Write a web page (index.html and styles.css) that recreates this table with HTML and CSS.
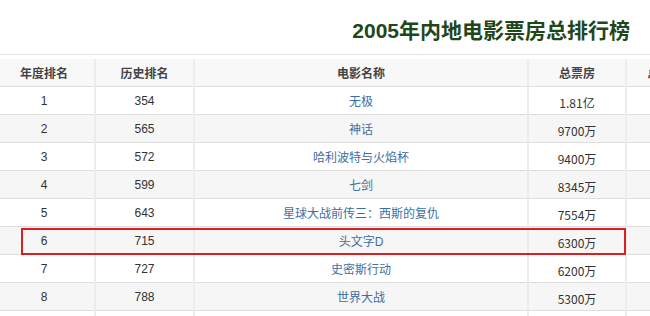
FILE: index.html
```html
<!DOCTYPE html>
<html lang="zh-CN">
<head>
<meta charset="utf-8">
<title>2005年内地电影票房总排行榜</title>
<link rel="stylesheet" href="styles.css">
</head>
<body>
<div class="page">
  <div class="title-bar">
    <h1 class="title">2005年内地电影票房总排行榜</h1>
  </div>
  <table class="rank">
    <colgroup>
      <col class="c1"><col class="c2"><col class="c3"><col class="c4"><col class="c5">
    </colgroup>
    <thead>
      <tr><th>年度排名</th><th>历史排名</th><th>电影名称</th><th>总票房</th><th>总人次</th></tr>
    </thead>
    <tbody>
      <tr><td>1</td><td>354</td><td><a href="#">无极</a></td><td class="money">1.81亿</td><td></td></tr>
      <tr><td>2</td><td>565</td><td><a href="#">神话</a></td><td class="money">9700万</td><td></td></tr>
      <tr><td>3</td><td>572</td><td><a href="#">哈利波特与火焰杯</a></td><td class="money">9400万</td><td></td></tr>
      <tr><td>4</td><td>599</td><td><a href="#">七剑</a></td><td class="money">8345万</td><td></td></tr>
      <tr><td>5</td><td>643</td><td><a href="#">星球大战前传三：西斯的复仇</a></td><td class="money">7554万</td><td></td></tr>
      <tr><td>6</td><td>715</td><td><a href="#">头文字D</a></td><td class="money">6300万</td><td></td></tr>
      <tr><td>7</td><td>727</td><td><a href="#">史密斯行动</a></td><td class="money">6200万</td><td></td></tr>
      <tr><td>8</td><td>788</td><td><a href="#">世界大战</a></td><td class="money">5300万</td><td></td></tr>
      <tr class="tail"><td></td><td></td><td></td><td></td><td></td></tr>
    </tbody>
  </table>
  <div class="highlight"></div>
</div>
</body>
</html>
```
FILE: styles.css
```css
html, body {
  margin: 0;
  padding: 0;
  background: #fff;
  overflow: hidden;
}
body {
  width: 650px;
  height: 316px;
  font-family: "Liberation Sans", "Noto Sans CJK SC", sans-serif;
  color: #333;
}
.page {
  position: relative;
  width: 650px;
  height: 316px;
  overflow: hidden;
}
.title-bar {
  height: 55px;
  border-bottom: 1px solid #e2e2e2;
  display: flex;
  justify-content: flex-end;
  align-items: center;
  padding-right: 20px;
  box-sizing: border-box;
  margin-bottom: 4px;
}
.title {
  margin: 6px 0 0 0;
  font-family: "Liberation Sans", "Noto Sans CJK SC", sans-serif;
  font-size: 21px;
  font-weight: bold;
  color: #1f471c;
  line-height: 1;
  white-space: nowrap;
}
.rank {
  border-collapse: collapse;
  table-layout: fixed;
  width: 710px;
  margin-left: -6px;
  font-size: 12px;
}
.c1 { width: 101px; }
.c2 { width: 99px; }
.c3 { width: 334px; }
.c4 { width: 98px; }
.c5 { width: 78px; }
.rank th, .rank td {
  text-align: center;
  padding: 0;
  border-left: 2px solid #ececec;
  border-bottom: 1px solid #dedede;
  white-space: nowrap;
}
.rank th:first-child, .rank td:first-child {
  border-left: none;
}
.rank th {
  height: 27px;
  font-weight: bold;
  color: #444;
  background: #f8f8f8;
}
.rank td {
  height: 27px;
  color: #333;
}
.rank tbody tr:nth-child(even) td {
  background: #f6f6f6;
}
.rank tbody tr.tail td {
  background: #fff;
}
.rank a {
  color: #3c6fa3;
  text-decoration: none;
}
.rank td.money {
  font-family: "Noto Sans CJK SC", sans-serif;
  font-size: 12px;
  padding-top: 3px;
  height: 24px;
}
.highlight {
  position: absolute;
  left: 21px;
  top: 228px;
  width: 605px;
  height: 27px;
  box-sizing: border-box;
  border: 2px solid #d7201f;
  pointer-events: none;
}
```
